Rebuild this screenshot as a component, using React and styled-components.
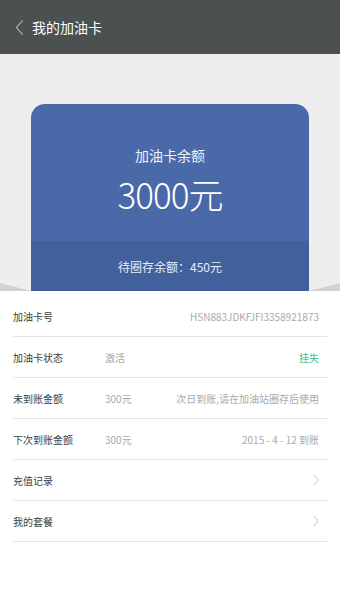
import React from "react";
import styled, { createGlobalStyle } from "styled-components";

const GlobalStyle = createGlobalStyle`
  html, body {
    margin: 0;
    padding: 0;
    background: #ffffff;
  }
  body {
    font-family: "Noto Sans CJK SC", "Noto Sans", sans-serif;
  }
`;

const rows = [
  { label: "加油卡号", right: "HSN883JDKFJFI3358921873" },
  { label: "加油卡状态", mid: "激活", right: "挂失", green: true },
  { label: "未到账金额", mid: "300元", right: "次日到账,请在加油站圈存后使用" },
  { label: "下次到账金额", mid: "300元", right: "2015 - 4 - 12 到账" },
  { label: "充值记录", arrow: true },
  { label: "我的套餐", arrow: true },
];

const App = () => {
  return (
    <>
      <GlobalStyle />
      <Page>
        <Header>
          <Back viewBox="0 0 10 18">
            <path d="M8.5 1 L1.5 9 L8.5 17" />
          </Back>
          <Title>我的加油卡</Title>
        </Header>
        <Top>
          <Card>
            <CardMain>
              <CardLabel>加油卡余额</CardLabel>
              <Amount>3000元</Amount>
            </CardMain>
            <CardStrip>待圈存余额：450元</CardStrip>
          </Card>
        </Top>
        <List>
          {rows.map((r) => (
            <Row key={r.label}>
              <Label>{r.label}</Label>
              <Mid>{r.mid}</Mid>
              {r.right && <Right $green={r.green}>{r.right}</Right>}
              {r.arrow && (
                <Arrow viewBox="0 0 6 12">
                  <path d="M0.7 0.8 L5.2 6 L0.7 11.2" />
                </Arrow>
              )}
            </Row>
          ))}
        </List>
      </Page>
    </>
  );
};
export default App;

const Page = styled.div`
  width: 340px;
  min-height: 600px;
  background: #ffffff;
`;

const Header = styled.div`
  height: 54px;
  background: #4b5050;
  display: flex;
  align-items: center;
  padding-left: 15px;
  box-sizing: border-box;
`;

const Back = styled.svg`
  width: 9px;
  height: 17px;
  fill: none;
  stroke: #a6aaaa;
  stroke-width: 1.3;
  margin-right: 8px;
`;

const Title = styled.span`
  color: #ffffff;
  font-size: 14px;
`;

const Top = styled.div`
  background: #eeeeee;
  padding: 50px 31px 0;
  position: relative;

  &::before,
  &::after {
    content: "";
    position: absolute;
    bottom: 0;
    width: 31px;
    height: 8px;
    opacity: 0.7;
  }
  &::before {
    left: 0;
    background: linear-gradient(to top right, #c6c6c6 0%, #c6c6c6 48%, transparent 52%);
  }
  &::after {
    right: 0;
    background: linear-gradient(to top left, #c6c6c6 0%, #c6c6c6 48%, transparent 52%);
  }
`;

const Card = styled.div`
  background: #4a69a8;
  border-radius: 14px 14px 0 0;
  overflow: hidden;
  color: #ffffff;
  text-align: center;
`;

const CardMain = styled.div`
  height: 137px;
  display: flex;
  flex-direction: column;
  align-items: center;
  padding-top: 41px;
  box-sizing: border-box;
`;

const CardLabel = styled.div`
  font-size: 14px;
  line-height: 20px;
  color: #eef2fa;
`;

const Amount = styled.div`
  font-size: 35px;
  font-weight: 300;
  line-height: 40px;
  margin-top: 9px;
  letter-spacing: -1px;
`;

const CardStrip = styled.div`
  height: 50px;
  background: #42609b;
  display: flex;
  align-items: center;
  justify-content: center;
  font-size: 12px;
  color: #e8edf6;
`;

const List = styled.div`
  padding: 5px 13px 0;
`;

const Row = styled.div`
  height: 41px;
  display: flex;
  align-items: center;
  border-bottom: 1px solid #e4e4e4;
  box-sizing: border-box;
  padding-right: 8px;
`;

const Label = styled.span`
  width: 92px;
  font-size: 10px;
  color: #3e3e3e;
`;

const Mid = styled.span`
  flex: 1;
  font-size: 10px;
  color: #a9a9a9;
`;

const Right = styled.span`
  font-size: 10px;
  color: ${({ $green }) => ($green ? "#34c089" : "#a9a9a9")};
`;

const Arrow = styled.svg`
  width: 6px;
  height: 12px;
  fill: none;
  stroke: #c4c4c4;
  stroke-width: 1;
`;
